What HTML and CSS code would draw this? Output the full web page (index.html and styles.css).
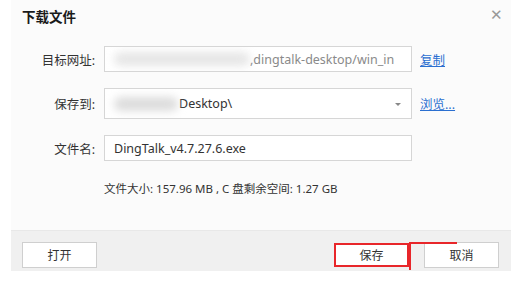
FILE: index.html
```html
<!DOCTYPE html>
<html>
<head>
  <meta charset="UTF-8">
  <title>下载文件</title>
  <link rel="stylesheet" href="styles.css">
</head>
<body>
  <div class="dialog">
    <div class="dialog-header">
      <span class="dialog-title">下载文件</span>
      <span class="close-btn">&#x2715;</span>
    </div>

    <div class="form">
      <div class="form-row">
        <label class="form-label">目标网址:</label>
        <div class="field">
          <span class="blur blur-url"></span>
          <span class="field-text muted">,dingtalk-desktop/win_in</span>
        </div>
        <a class="link" href="#">复制</a>
      </div>

      <div class="form-row">
        <label class="form-label">保存到:</label>
        <div class="field field-select">
          <span class="blur blur-path"></span>
          <span class="field-text">Desktop\</span>
          <span class="caret"></span>
        </div>
        <a class="link" href="#">浏览...</a>
      </div>

      <div class="form-row">
        <label class="form-label">文件名:</label>
        <div class="field">
          <span class="field-text">DingTalk_v4.7.27.6.exe</span>
        </div>
      </div>

      <p class="size-info">文件大小: 157.96 MB , C 盘剩余空间: 1.27 GB</p>
    </div>

    <div class="dialog-footer">
      <button class="btn">打开</button>
      <div class="footer-right">
        <button class="btn btn-marked">保存</button>
        <button class="btn">取消</button>
        <!-- red annotation over the cancel button -->
        <span class="mark-cancel"></span>
      </div>
    </div>
  </div>
</body>
</html>
```

FILE: styles.css
```css
/* Base */
body {
  margin: 0;
  background: #fff;
  font-family: "Noto Sans", "Noto Sans CJK SC", sans-serif;
  font-size: 12px;
  color: #333;
}
.dialog {
  margin-left: 11px;
  width: 500px;
  height: 271px;
  background: #fbfbfb;
  display: flex;
  flex-direction: column;
}
/* Header */
.dialog-header {
  height: 46px;
  display: flex;
  justify-content: space-between;
  padding: 6px 8px 0 11px;
  box-sizing: border-box;
}
.dialog-title {
  font-size: 13.5px;
  font-weight: 700;
  color: #1a1a1a;
  line-height: 22px;
}
.close-btn {
  font-size: 15px;
  font-weight: 300;
  color: #999;
  line-height: 16px;
}
/* Form */
.form {
  flex: 1;
  display: flex;
  flex-direction: column;
  gap: 16px;
}
.form-row {
  display: flex;
  align-items: center;
}
.form-label {
  width: 84px;
  text-align: right;
  margin-right: 9px;
  font-size: 12.5px;
  color: #333;
}
.field {
  position: relative;
  width: 308px;
  height: 26px;
  box-sizing: border-box;
  border: 1px solid #d6d6d6;
  background: #fff;
  display: flex;
  align-items: center;
  padding-left: 9px;
  overflow: hidden;
  font-size: 12.5px;
}
.field-select {
  height: 31px;
}
.field-text {
  white-space: nowrap;
  color: #333;
}
.muted {
  color: #8a8a8a;
}
.blur {
  display: inline-block;
  height: 14px;
  background: #dcdcdc;
  border-radius: 7px;
  filter: blur(4px);
  flex-shrink: 0;
}
.blur-url {
  width: 136px;
  margin-right: 0;
  opacity: 0.7;
}
.blur-path {
  width: 64px;
  margin-right: 1px;
}
.caret {
  position: absolute;
  right: 10px;
  top: 14px;
  border-left: 3px solid transparent;
  border-right: 3px solid transparent;
  border-top: 3px solid #888;
}
.link {
  margin-left: 8px;
  color: #2b6fd0;
  font-size: 12.5px;
}
.size-info {
  margin: 3px 0 0 93px;
  font-size: 11.5px;
  color: #333;
}
/* Footer */
.dialog-footer {
  height: 41px;
  background: #f0f0f0;
  border-top: 1px solid #e8e8e8;
  box-sizing: border-box;
  display: flex;
  justify-content: space-between;
  padding: 11px 12px 0 11px;
}
.footer-right {
  position: relative;
  display: flex;
  gap: 15px;
}
.btn {
  width: 75px;
  height: 26px;
  background: #fff;
  border: 1px solid #cfcfcf;
  font-family: inherit;
  font-size: 12px;
  color: #333;
  padding: 0;
}
.btn-marked {
  border: 2px solid #e8262a;
  height: 24px;
  margin-top: 1px;
}
.mark-cancel {
  position: absolute;
  left: 75px;
  top: 0;
  width: 46px;
  height: 26px;
  border-top: 2px solid #e8262a;
  border-left: 2px solid #e8262a;
}
```
